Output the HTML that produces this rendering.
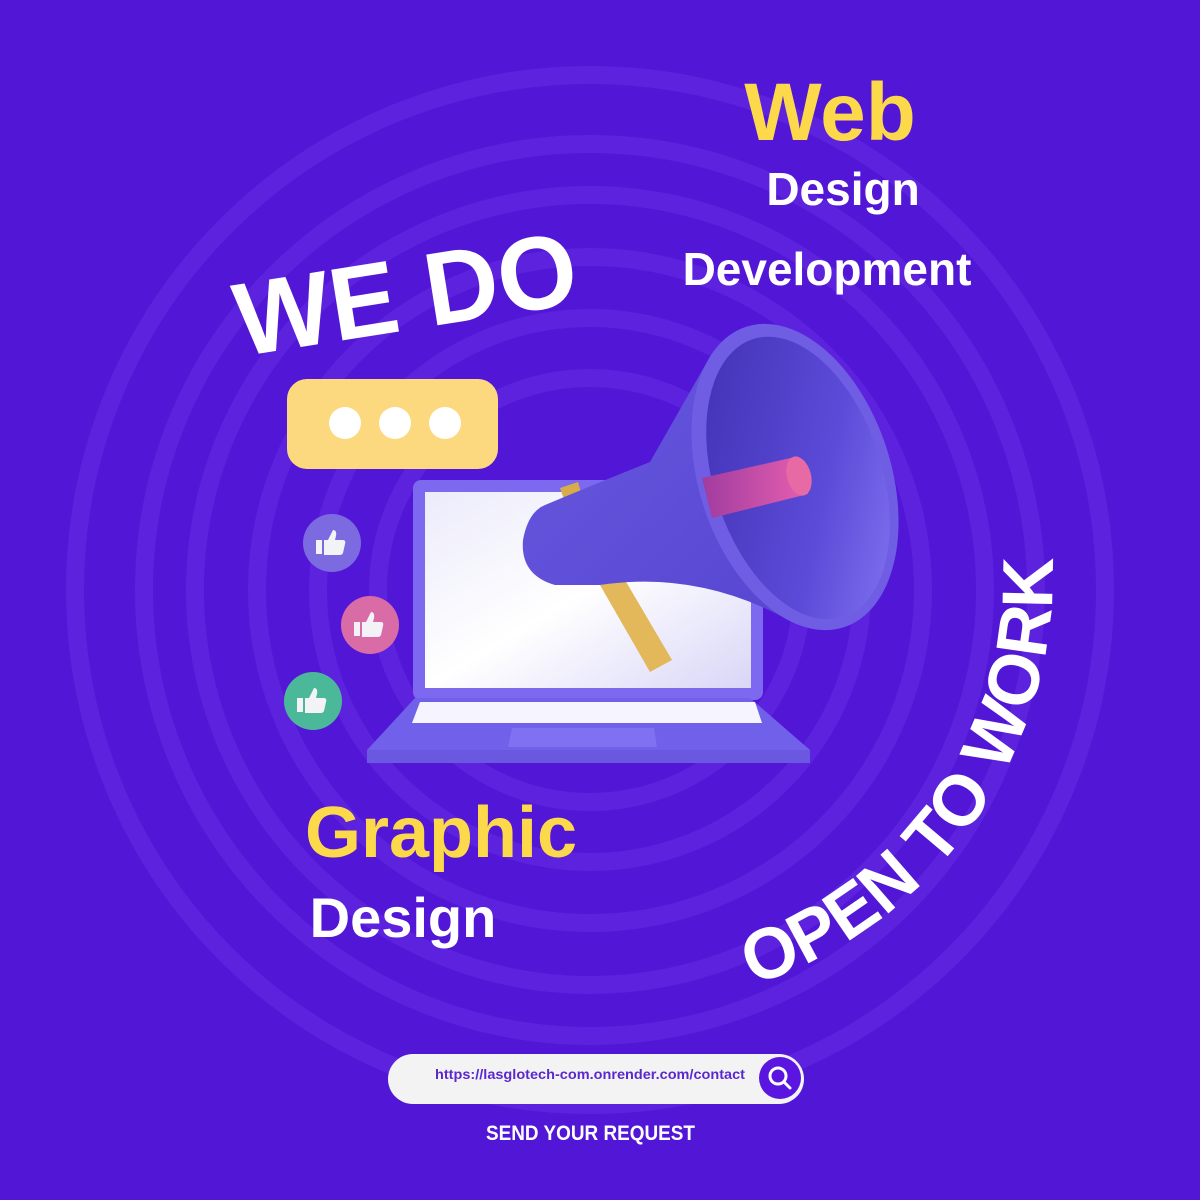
<!DOCTYPE html>
<html><head><meta charset="utf-8"><style>
html,body{margin:0;padding:0;}
body{width:1200px;height:1200px;background:#5216d6;overflow:hidden;position:relative;font-family:"Liberation Sans",sans-serif;}
svg{position:absolute;left:0;top:0;}
</style></head><body>
<svg width="1200" height="1200" viewBox="0 0 1200 1200">
<defs>
<linearGradient id="scr" x1="0" y1="0" x2="1" y2="1"><stop offset="0" stop-color="#ecebfb"/><stop offset="0.5" stop-color="#ffffff"/><stop offset="1" stop-color="#d9d6f7"/></linearGradient>
<linearGradient id="bell" x1="0" y1="0" x2="1" y2="1"><stop offset="0" stop-color="#3f2fb0"/><stop offset="0.6" stop-color="#5b4bd8"/><stop offset="1" stop-color="#8a7bf5"/></linearGradient>
<linearGradient id="cone" x1="0" y1="0" x2="1" y2="1"><stop offset="0" stop-color="#6858e0"/><stop offset="1" stop-color="#5746d0"/></linearGradient>
<linearGradient id="pink" x1="0" y1="0" x2="1" y2="0"><stop offset="0" stop-color="#a03ca0"/><stop offset="1" stop-color="#e65fae"/></linearGradient>
<path id="arc" d="M 753 985 A 432 432 0 0 0 1052 550"/>
</defs>
<g fill="none" stroke="#5d22dd" stroke-width="18">
<circle cx="590" cy="590" r="515"/>
<circle cx="590" cy="590" r="446"/>
<circle cx="590" cy="590" r="395"/>
<circle cx="590" cy="590" r="333"/>
<circle cx="590" cy="590" r="272"/>
<circle cx="590" cy="590" r="212"/>
</g>
<!-- bubble -->
<rect x="287" y="379" width="211" height="90" rx="20" fill="#fcd97e"/>
<circle cx="345" cy="423" r="16" fill="#fff"/><circle cx="395" cy="423" r="16" fill="#fff"/><circle cx="445" cy="423" r="16" fill="#fff"/>
<!-- likes -->
<circle cx="332" cy="543" r="29" fill="#7c6ae0"/>
<circle cx="370" cy="625" r="29" fill="#d96ba6"/>
<circle cx="313" cy="701" r="29" fill="#4cb89a"/>
<g fill="#f2f2f7">
<path d="M316 540h6v14h-6z M324 540h4l5-10q4 0 3 6l-1 4h8q3 0 2 4l-2 9q-1 2-3 2h-16z"/>
<path d="M354 622h6v14h-6z M362 622h4l5-10q4 0 3 6l-1 4h8q3 0 2 4l-2 9q-1 2-3 2h-16z"/>
<path d="M297 698h6v14h-6z M305 698h4l5-10q4 0 3 6l-1 4h8q3 0 2 4l-2 9q-1 2-3 2h-16z"/>
</g>
<!-- laptop -->
<rect x="413" y="480" width="350" height="220" rx="8" fill="#7c69f0"/>
<rect x="425" y="492" width="326" height="196" fill="url(#scr)"/>
<path d="M415 698 H750 L810 750 V763 H367 V750 Z" fill="#7060ea"/>
<path d="M367 750 H810 V763 H367Z" fill="#6a58e0"/>
<path d="M420 702 H755 L762 723 H412 Z" fill="#f5f4ff"/>
<path d="M512 728 H654 L657 747 H508 Z" fill="#8070f2"/>
<!-- megaphone -->
<path d="M600 585 L625 580 L672 660 L650 672 Z" fill="#e2b85a"/>
<path d="M560 488 L578 482 L582 496 L565 502Z" fill="#d9ac4a"/>
<path d="M545 505 Q600 482 650 462 L707 362 L792 622 Q700 570 600 585 L555 585 Q520 575 523 540 Q528 512 545 505Z" fill="url(#cone)"/>
<ellipse cx="795" cy="477" rx="96" ry="158" transform="rotate(-18 795 477)" fill="#6f5ee4"/>
<ellipse cx="798" cy="478" rx="84" ry="146" transform="rotate(-18 798 478)" fill="url(#bell)"/>
<path d="M702 478 L795 457 L808 494 L712 518Z" fill="url(#pink)"/>
<ellipse cx="799" cy="476" rx="12" ry="20" transform="rotate(-15 799 476)" fill="#e86aa4"/>
<!-- texts -->
<text x="405" y="330" font-size="104" font-weight="bold" fill="#fff" text-anchor="middle" transform="rotate(-9 405 290)" textLength="345" lengthAdjust="spacingAndGlyphs">WE DO</text>
<text x="830" y="140" font-size="82" font-weight="bold" fill="#fcd94a" text-anchor="middle">Web</text>
<text x="843" y="205" font-size="46" font-weight="bold" fill="#fff" text-anchor="middle">Design</text>
<text x="827" y="285" font-size="46" font-weight="bold" fill="#fff" text-anchor="middle">Development</text>
<text x="441" y="857" font-size="72" font-weight="bold" fill="#fcd94a" text-anchor="middle">Graphic</text>
<text x="403" y="937" font-size="56" font-weight="bold" fill="#fff" text-anchor="middle">Design</text>
<text font-size="72" font-weight="bold" fill="#fff"><textPath href="#arc" textLength="560" lengthAdjust="spacingAndGlyphs">OPEN TO WORK</textPath></text>
<!-- search -->
<rect x="388" y="1054" width="416" height="50" rx="25" fill="#f3f3f4"/>
<circle cx="780" cy="1078" r="21" fill="#5a16e0"/>
<circle cx="778" cy="1076" r="8" fill="none" stroke="#fff" stroke-width="3"/>
<path d="M784 1082 L790 1088" stroke="#fff" stroke-width="3" stroke-linecap="round"/>
<text x="435" y="1079" font-size="13.5" font-weight="bold" fill="#5b28cf" textLength="310" lengthAdjust="spacingAndGlyphs">https://lasglotech-com.onrender.com/contact</text>
<text x="486" y="1140" font-size="21" font-weight="bold" fill="#fff" textLength="209" lengthAdjust="spacingAndGlyphs">SEND YOUR REQUEST</text>
</svg>
</body></html>
